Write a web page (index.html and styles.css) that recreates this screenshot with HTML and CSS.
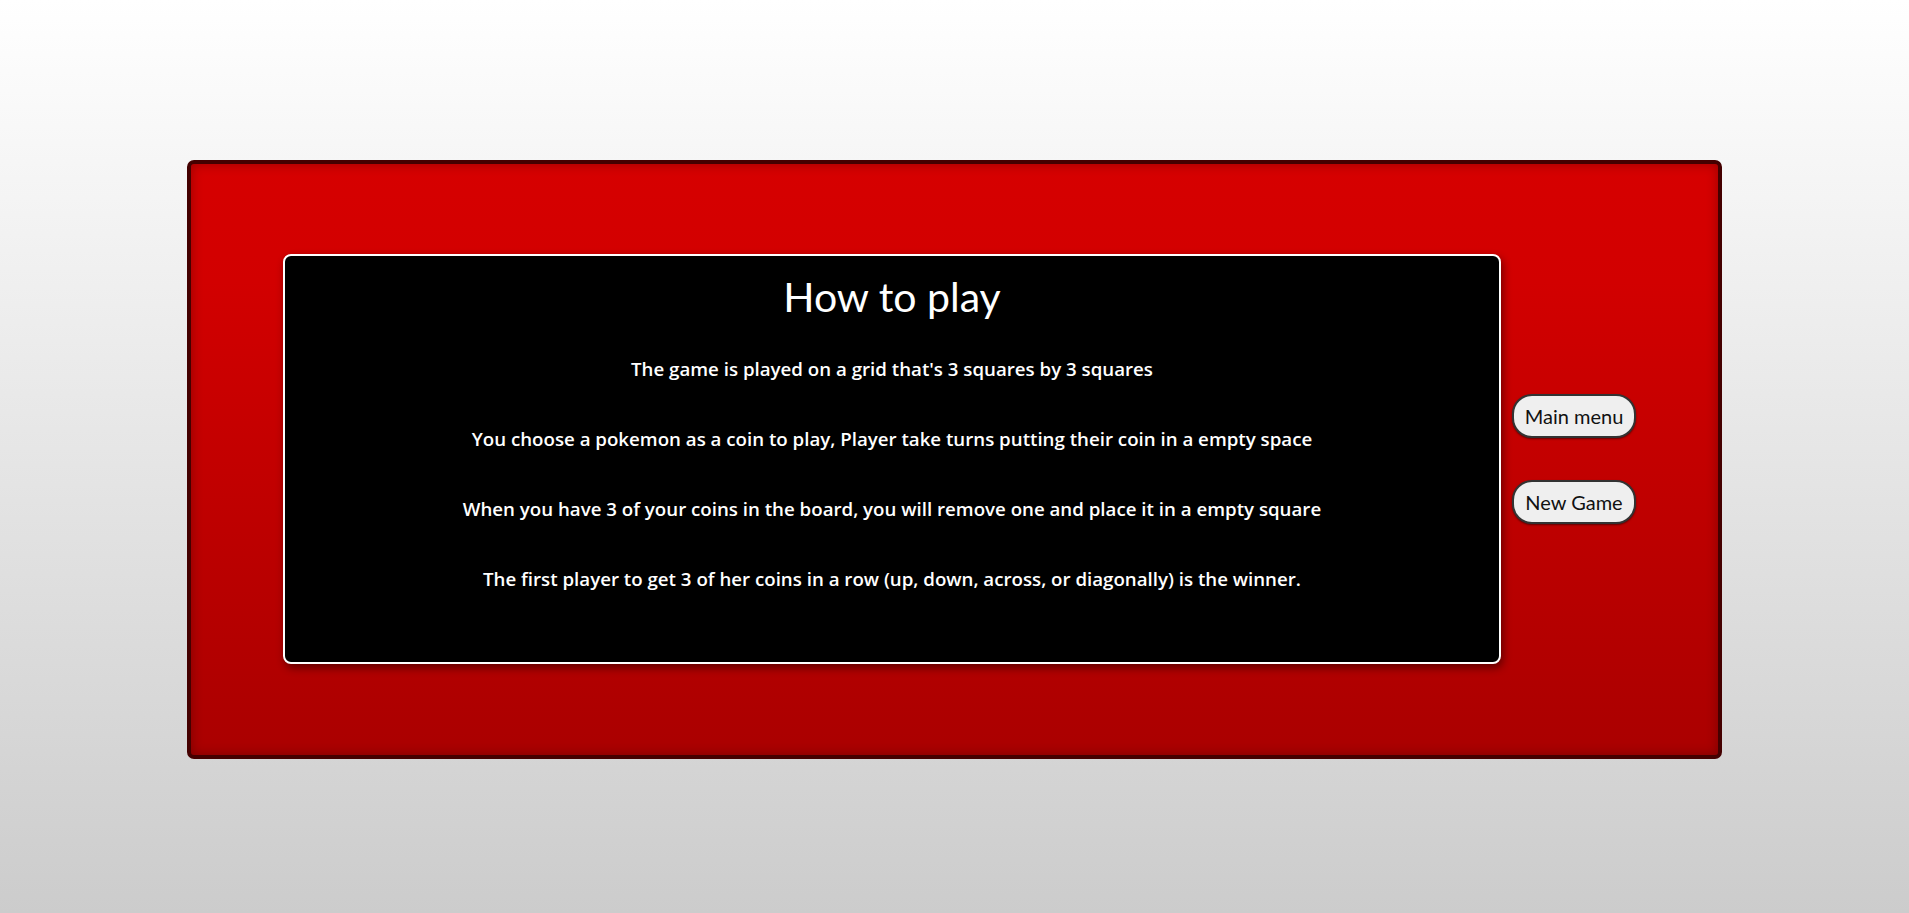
FILE: index.html
```html
<!DOCTYPE html>
<html lang="en">
<head>
<meta charset="utf-8">
<title>How to play</title>
<link rel="stylesheet" href="styles.css">
</head>
<body>
  <main class="board">
    <section class="rules">
      <h1 class="rules-title">How to play</h1>
      <p class="rule">The game is played on a grid that's 3 squares by 3 squares</p>
      <p class="rule">You choose a pokemon as a coin to play, Player take turns putting their coin in a empty space</p>
      <p class="rule">When you have 3 of your coins in the board, you will remove one and place it in a empty square</p>
      <p class="rule">The first player to get 3 of her coins in a row (up, down, across, or diagonally) is the winner.</p>
    </section>
    <nav class="actions">
      <button class="pill">Main menu</button>
      <button class="pill">New Game</button>
    </nav>
  </main>
</body>
</html>
```
FILE: styles.css
```css
html {
  height: 100%;
}
body {
  margin: 0;
  min-height: 100%;
  background: linear-gradient(to bottom, #ffffff 0%, #cccccc 100%);
  font-family: Lato, "Open Sans", sans-serif;
  overflow: hidden;
}
.board {
  box-sizing: border-box;
  width: 1535px;
  height: 599px;
  margin: 160px auto 0;
  border: 4px solid #440000;
  border-radius: 7px;
  background: linear-gradient(to bottom, #d60000 0%, #d20000 20%, #aa0000 100%);
  box-shadow: inset 0 0 12px rgba(0, 0, 0, 0.28);
  padding: 90px 0 91px 92px;
  display: flex;
  align-items: flex-start;
  gap: 11px;
}
.rules {
  box-sizing: border-box;
  width: 1218px;
  height: 410px;
  background: #000;
  border: 2px solid #ffffff;
  border-radius: 8px;
  box-shadow: 2px 4px 8px rgba(0, 0, 0, 0.45);
  padding-top: 17px;
  display: flex;
  flex-direction: column;
  align-items: center;
  color: #ffffff;
  text-align: center;
}
.rules-title {
  margin: 0 0 38px;
  font-size: 41px;
  line-height: 48px;
  font-weight: 400;
}
.rule {
  margin: 0 0 50px;
  font-family: "Open Sans", Lato, sans-serif;
  font-size: 18.7px;
  line-height: 20px;
  font-weight: 600;
}
.actions {
  align-self: center;
  display: flex;
  flex-direction: column;
  gap: 42px;
}
.pill {
  box-sizing: border-box;
  width: 124px;
  height: 44px;
  padding: 0;
  border: 2px solid #333333;
  border-radius: 20px;
  background: #efefef;
  color: #111;
  font-family: Lato, "Open Sans", sans-serif;
  font-size: 20px;
  box-shadow: 0 1px 2px rgba(0, 0, 0, 0.5);
}
```
